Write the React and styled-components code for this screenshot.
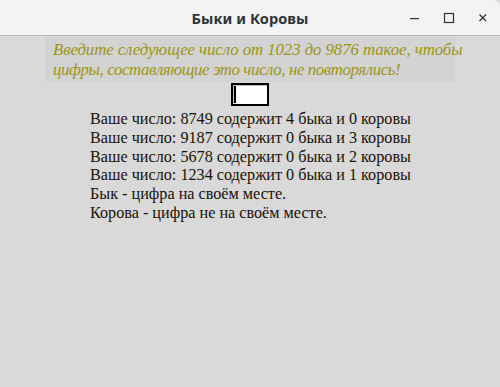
import React from 'react'
import styled, { createGlobalStyle } from 'styled-components'

const GlobalStyle = createGlobalStyle`
  html, body {
    margin: 0;
    padding: 0;
    background: #d9d9d9;
  }
  #root {
    height: 387px;
  }
`

const Window = styled.div`
  display: flex;
  flex-direction: column;
  width: 500px;
  height: 387px;
  background: #d9d9d9;
  overflow: hidden;
`

const TitleBar = styled.div`
  position: relative;
  display: flex;
  align-items: center;
  justify-content: center;
  height: 35px;
  flex-shrink: 0;
  background: #f3f3f3;
  border-bottom: 1px solid #b9b9b9;
  border-top-right-radius: 7px;
`

const Title = styled.div`
  font-family: "Noto Sans", "DejaVu Sans", sans-serif;
  font-weight: 700;
  font-size: 14.5px;
  color: #2e3436;
  letter-spacing: 0.1px;
`

const Controls = styled.div`
  position: absolute;
  right: 0;
  top: 0;
  height: 35px;
  display: flex;
  align-items: center;
`

const Control = styled.div`
  width: 34px;
  height: 35px;
  display: flex;
  align-items: center;
  justify-content: center;
  color: #2e3436;
`

const Body = styled.div`
  display: flex;
  flex-direction: column;
  align-items: center;
  padding-top: 1px;
`

const Banner = styled.div`
  width: 394px;
  padding: 3px 8px 3px 8px;
  background: #d3d3d3;
  font-family: "Liberation Serif", "Times New Roman", serif;
  font-style: italic;
  font-size: 16.8px;
  line-height: 19.6px;
  color: #9c9510;
  white-space: nowrap;
`

const BannerLine = styled.div`
  letter-spacing: ${(p) => p.$spacing || 0}px;
`

const Entry = styled.div`
  position: relative;
  margin-top: 1px;
  width: 34px;
  height: 19px;
  background: #ffffff;
  border: 2px solid #000;
  box-shadow: inset 1px 1px 0 #bfbfbf;
`

const Cursor = styled.div`
  position: absolute;
  left: 1px;
  top: 1px;
  width: 2px;
  height: 17px;
  background: #000;
`

const Results = styled.div`
  margin-top: 4px;
  width: 320px;
  font-family: "Liberation Serif", "Times New Roman", serif;
  font-size: 16.2px;
  line-height: 18.67px;
  color: #1a1208;
  white-space: nowrap;
`

const Line = styled.div``

const guesses = [
  { num: '8749', bulls: 4, cows: 0 },
  { num: '9187', bulls: 0, cows: 3 },
  { num: '5678', bulls: 0, cows: 2 },
  { num: '1234', bulls: 0, cows: 1 }
]

export default function App() {
  return (
    <Window>
      <GlobalStyle />
      <TitleBar>
        <Title>Быки и Коровы</Title>
        <Controls>
          <Control>
            <svg width="12" height="12" viewBox="0 0 12 12">
              <rect x="1" y="6" width="9" height="1.2" fill="currentColor" />
            </svg>
          </Control>
          <Control>
            <svg width="12" height="12" viewBox="0 0 12 12">
              <rect x="1.5" y="1.5" width="9" height="9" fill="none" stroke="currentColor" strokeWidth="1.2" />
            </svg>
          </Control>
          <Control>
            <svg width="12" height="12" viewBox="0 0 12 12">
              <path d="M2.5 2.5 L9 9 M9 2.5 L2.5 9" stroke="currentColor" strokeWidth="1.3" />
            </svg>
          </Control>
        </Controls>
      </TitleBar>
      <Body>
        <Banner>
          <BannerLine $spacing={-0.06}>
            Введите следующее число от 1023 до 9876 такое, чтобы
          </BannerLine>
          <BannerLine $spacing={-0.37}>
            цифры, составляющие это число, не повторялись!
          </BannerLine>
        </Banner>
        <Entry>
          <Cursor />
        </Entry>
        <Results>
          {guesses.map((g) => (
            <Line key={g.num}>
              Ваше число: {g.num} содержит {g.bulls} быка и {g.cows} коровы
            </Line>
          ))}
          <Line>Бык - цифра на своём месте.</Line>
          <Line>Корова - цифра не на своём месте.</Line>
        </Results>
      </Body>
    </Window>
  )
}
